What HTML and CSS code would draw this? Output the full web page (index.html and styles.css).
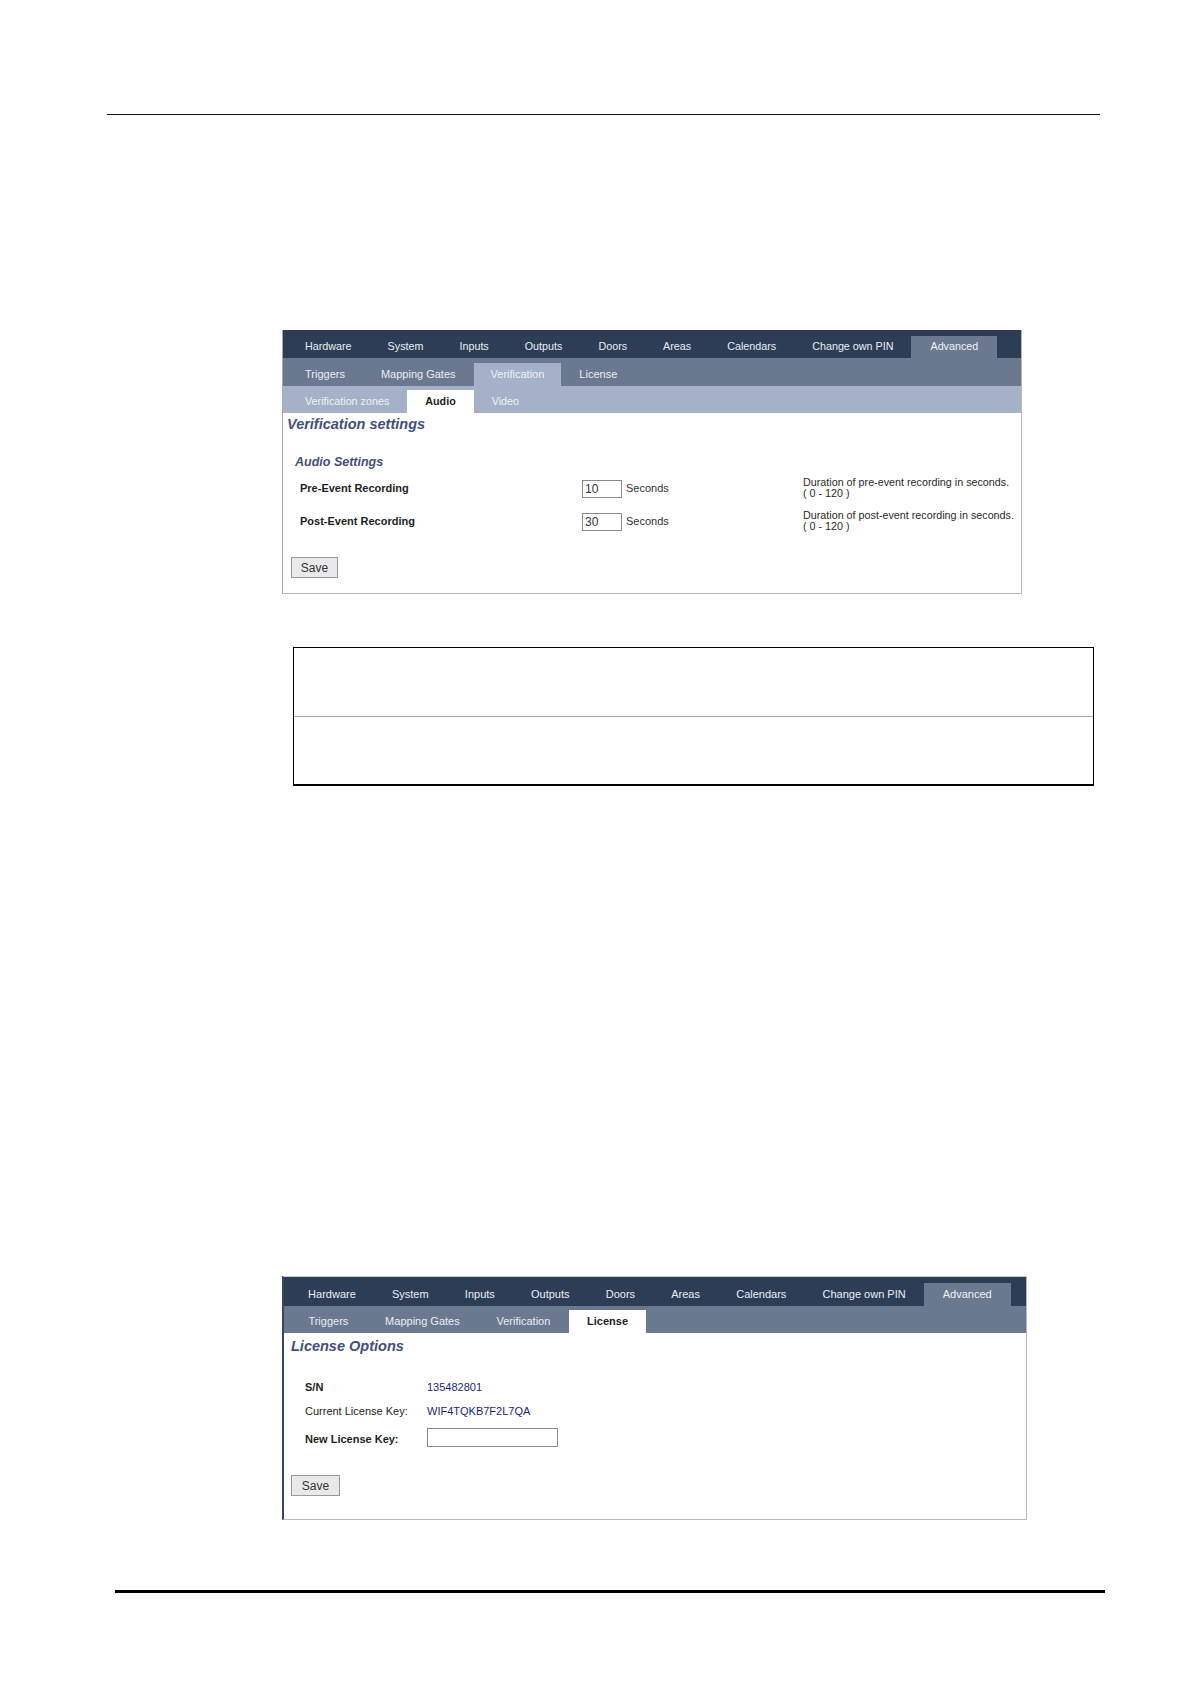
FILE: index.html
```html
<!DOCTYPE html>
<html>
<head>
<meta charset="utf-8">
<title>Verification settings</title>
<link rel="stylesheet" href="styles.css">
</head>
<body>
<div class="page">
  <div class="rule-top"></div>

  <div class="panel panel-audio">
    <div class="nav nav-main">
      <span class="tab">Hardware</span>
      <span class="tab">System</span>
      <span class="tab">Inputs</span>
      <span class="tab">Outputs</span>
      <span class="tab">Doors</span>
      <span class="tab">Areas</span>
      <span class="tab">Calendars</span>
      <span class="tab">Change own PIN</span>
      <span class="tab active-main">Advanced</span>
    </div>
    <div class="nav nav-sub">
      <span class="tab">Triggers</span>
      <span class="tab">Mapping Gates</span>
      <span class="tab active-sub">Verification</span>
      <span class="tab">License</span>
    </div>
    <div class="nav nav-third">
      <span class="tab">Verification zones</span>
      <span class="tab active-white">Audio</span>
      <span class="tab">Video</span>
    </div>
    <div class="content content-audio">
      <h1 class="page-title">Verification settings</h1>
      <h2 class="section-title">Audio Settings</h2>
      <div class="settings-grid">
        <div class="label">Pre-Event Recording</div>
        <div class="field"><span class="num-input">10</span><span class="unit">Seconds</span></div>
        <div class="desc">Duration of pre-event recording in seconds.<br>( 0 - 120 )</div>
        <div class="label">Post-Event Recording</div>
        <div class="field"><span class="num-input">30</span><span class="unit">Seconds</span></div>
        <div class="desc">Duration of post-event recording in seconds.<br>( 0 - 120 )</div>
      </div>
      <button class="btn btn-audio">Save</button>
    </div>
  </div>

  <div class="note">
    <div class="note-row"></div>
    <div class="note-row note-row-last"></div>
  </div>

  <div class="panel panel-license">
    <div class="nav nav-main nav-lg">
      <span class="tab">Hardware</span>
      <span class="tab">System</span>
      <span class="tab">Inputs</span>
      <span class="tab">Outputs</span>
      <span class="tab">Doors</span>
      <span class="tab">Areas</span>
      <span class="tab">Calendars</span>
      <span class="tab">Change own PIN</span>
      <span class="tab active-main">Advanced</span>
    </div>
    <div class="nav nav-sub nav-lg nav-sub-lic">
      <span class="tab">Triggers</span>
      <span class="tab">Mapping Gates</span>
      <span class="tab">Verification</span>
      <span class="tab active-white">License</span>
    </div>
    <div class="content content-license">
      <h1 class="page-title">License Options</h1>
      <div class="lic-grid">
        <div class="lic-label bold">S/N</div>
        <div class="lic-value">135482801</div>
        <div class="lic-label">Current License Key:</div>
        <div class="lic-value">WIF4TQKB7F2L7QA</div>
        <div class="lic-label bold">New License Key:</div>
        <div class="lic-value"><span class="text-input"></span></div>
      </div>
      <button class="btn btn-license">Save</button>
    </div>
  </div>

  <div class="rule-bottom"></div>
</div>
</body>
</html>
```

FILE: styles.css
```css
html, body {
  margin: 0;
  padding: 0;
  background: #ffffff;
}

body {
  font-family: "Liberation Sans", Arial, sans-serif;
  color: #222222;
}

.page {
  width: 1191px;
  height: 1684px;
  padding-top: 114px;
  box-sizing: border-box;
  overflow: hidden;
}

.rule-top {
  margin-left: 107px;
  width: 993px;
  border-top: 1.5px solid #111111;
}

.rule-bottom {
  margin-left: 115px;
  margin-top: 70px;
  width: 990px;
  border-top: 3px solid #000000;
}

/* ---------- panels ---------- */
.panel {
  box-sizing: border-box;
  margin-left: 282px;
  border-right: 1px solid #b9b9b9;
  border-bottom: 1px solid #b9b9b9;
  background: #ffffff;
}

.panel-audio {
  width: 740px;
  margin-top: 215px;
  border-left: 1px solid #a9a9a9;
}

.panel-license {
  width: 745px;
  margin-top: 490px;
  border-top: 1px solid #c9c9c9;
  border-left: 2px solid #3a4560;
}

.nav {
  display: flex;
  align-items: flex-end;
  box-sizing: border-box;
  padding-left: 4px;
  font-size: 10.75px;
  white-space: nowrap;
}

.nav .tab {
  display: block;
  padding: 0 18px;
  height: 22px;
  line-height: 21px;
}

.nav-main {
  height: 28px;
  background: #2e3d56;
  color: #e9edf3;
}

.nav-sub {
  height: 28px;
  background: #6b7990;
  color: #e9edf3;
  font-size: 11px;
}

.nav-sub .tab {
  height: 23px;
  line-height: 22px;
}

.nav-third {
  height: 27px;
  background: #a4b1c8;
  color: #eef1f6;
}

.nav-third .tab {
  height: 23px;
  line-height: 22px;
}

.active-main {
  background: #6b7990;
  padding: 0 19px !important;
  color: #eef1f6;
}

.active-sub {
  background: #a4b1c8;
  color: #eef1f6;
  padding: 0 17px 0 17px !important;
}

.active-white {
  background: #ffffff;
  color: #222222;
  font-weight: bold;
}

.nav-lg {
  font-size: 11px;
  padding-left: 6px;
}

.nav-lg .tab {
  padding: 0 18.4px;
}

.panel-license .nav-main .tab {
  padding: 0 18.1px;
  height: 23px;
  line-height: 22px;
}

.panel-license .nav-main {
  height: 29px;
}

.nav-sub-lic {
  height: 27px;
}

/* ---------- content ---------- */
.content {
  box-sizing: border-box;
  padding-left: 4px;
}

.page-title {
  margin: 0;
  font-size: 14.5px;
  line-height: 18px;
  font-weight: bold;
  font-style: italic;
  color: #434f7b;
}

.content-audio {
  height: 180px;
  padding-top: 2px;
}

.section-title {
  margin: 21px 0 0 8px;
  font-size: 12.5px;
  line-height: 16px;
  font-weight: bold;
  font-style: italic;
  color: #434f7b;
}

.settings-grid {
  display: grid;
  grid-template-columns: 282px 221px 220px;
  grid-auto-rows: 33px;
  margin-left: 13px;
  margin-top: 8px;
  font-size: 11px;
}

.label {
  font-weight: bold;
  line-height: 13px;
  padding-top: 4px;
  color: #1e1e1e;
}

.field {
  display: flex;
  align-items: flex-start;
  padding-top: 2px;
}

.num-input {
  box-sizing: border-box;
  width: 40px;
  height: 18px;
  border: 1px solid #8a8a8a;
  font-size: 12px;
  line-height: 16px;
  padding-left: 2px;
  color: #333333;
}

.unit {
  margin-left: 4px;
  line-height: 14px;
  padding-top: 1px;
  color: #333333;
}

.desc {
  white-space: nowrap;
  line-height: 11px;
  font-size: 10.75px;
  color: #2a2a2a;
  margin-top: -1px;
}

.btn {
  display: block;
  box-sizing: border-box;
  font-family: "Liberation Sans", Arial, sans-serif;
  font-size: 12px;
  color: #333333;
  background: #e9e9e9;
  border: 1px solid #9a9a9a;
  border-radius: 0;
  padding: 0;
  text-align: center;
}

.btn-audio {
  width: 47px;
  height: 21px;
  margin-left: 4px;
  margin-top: 13px;
}

/* ---------- note box ---------- */
.note {
  box-sizing: border-box;
  margin-left: 293px;
  margin-top: 53px;
  width: 801px;
  height: 139px;
  border: 1px solid #000000;
  border-bottom: 2px solid #000000;
}

.note-row {
  height: 68px;
  border-bottom: 1px solid #a8a8a8;
}

.note-row-last {
  border-bottom: none;
}

/* ---------- license ---------- */
.content-license {
  height: 186px;
  padding-top: 4px;
  padding-left: 7px;
}

.lic-grid {
  display: grid;
  grid-template-columns: 122px 200px;
  grid-template-rows: 24px 28px 28px;
  margin-left: 14px;
  margin-top: 25px;
  font-size: 11px;
  line-height: 14px;
}

.lic-label {
  color: #1e1e1e;
}

.bold {
  font-weight: bold;
}

.lic-value {
  color: #1b1f7a;
}

.text-input {
  display: block;
  box-sizing: border-box;
  width: 131px;
  height: 19px;
  margin-top: -4px;
  border: 1px solid #8a8a8a;
  background: #ffffff;
}

.btn-license {
  width: 49px;
  height: 21px;
  margin-left: 0;
  margin-top: 15px;
}
```
